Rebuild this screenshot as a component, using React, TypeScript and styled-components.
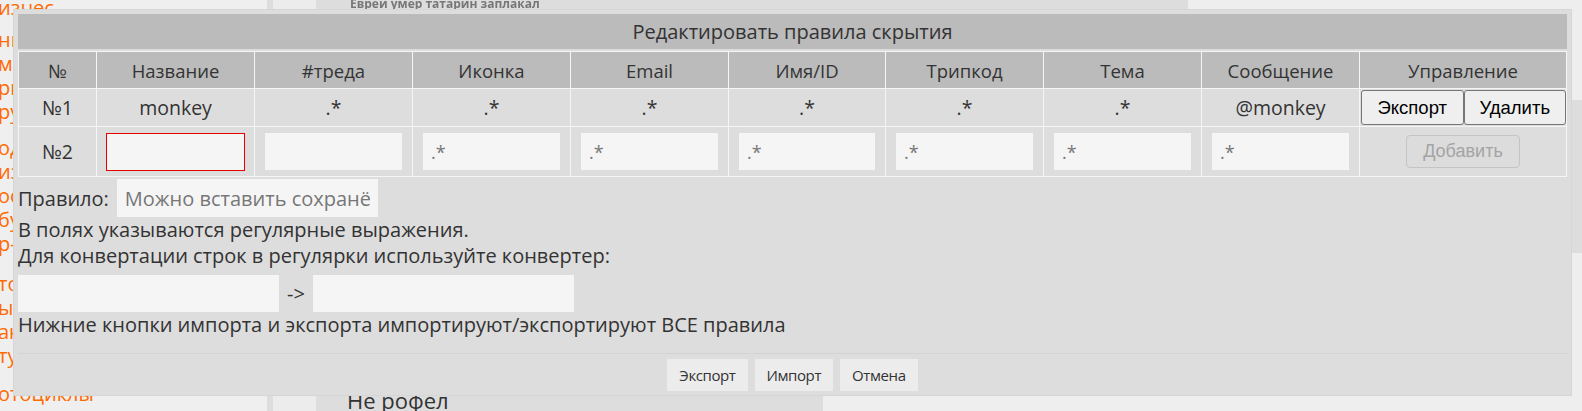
import React from 'react';
import styled, { createGlobalStyle } from 'styled-components';

const GlobalStyle = createGlobalStyle`
  html, body {
    margin: 0;
    padding: 0;
  }
  body {
    background: #eee;
    font-family: 'Open Sans', sans-serif;
    overflow: hidden;
  }
`;

const Page = styled.div`
  position: relative;
  display: flex;
  width: 1582px;
  height: 411px;
  overflow: hidden;
  background: #eee;
`;

const Sidebar = styled.nav`
  flex: none;
  width: 267px;
  background: #efefef;
  overflow: hidden;
`;

const LinkGroup = styled.div<{ $gap: number }>`
  margin-top: ${(p) => p.$gap}px;
  margin-left: -2px;
`;

const SideLink = styled.div`
  height: 24px;
  line-height: 24px;
  font-size: 20px;
  color: #ff6a00;
  white-space: nowrap;
`;

const Divider = styled.div`
  flex: none;
  width: 6px;
  background: #ddd;
`;

const NarrowColumn = styled.div`
  flex: none;
  width: 43px;
  background: #ececec;
`;

const MainColumn = styled.main`
  flex: none;
  width: 872px;
  display: flex;
  flex-direction: column;
  justify-content: space-between;
`;

const TopPost = styled.div`
  height: 10px;
  background: #ddd;
  overflow: hidden;
`;

const BlurredTitle = styled.div`
  margin: -5px 0 0 34px;
  font-size: 12px;
  font-weight: bold;
  color: #777;
  filter: blur(0.6px);
`;

const BottomPost = styled.div`
  width: 507px;
  height: 30px;
  background: #ddd;
  overflow: hidden;
`;

const PostText = styled.div`
  margin: 4px 0 0 31px;
  font-size: 22px;
  color: #333;
`;

const RightColumn = styled.aside`
  flex: 1;
  padding-top: 100px;
`;

const RightBox = styled.div`
  height: 153px;
  background: #ddd;
`;

const Modal = styled.div`
  position: absolute;
  top: 10px;
  left: 14px;
  width: 1557px;
  box-sizing: border-box;
  padding: 4px 4px 4px;
  background: #ddd;
  box-shadow: 0 0 0 1px #d6d6d6;
  font-family: 'Open Sans', sans-serif;
  font-size: 20px;
  color: #333;
`;

const Title = styled.div`
  height: 35px;
  line-height: 35px;
  background: #bbb;
  text-align: center;
  font-size: 20px;
  margin-bottom: 2px;
`;

const RulesTable = styled.table`
  width: 1548px;
  border-collapse: collapse;
  table-layout: fixed;
  border: 1px solid #f5f5f5;
`;

const Row = styled.tr<{ $h: number }>`
  height: ${(p) => p.$h}px;
`;

const HeadCell = styled.th`
  background: #bbb;
  font-weight: normal;
  font-size: 18.5px;
  border: 1px solid #f5f5f5;
  padding: 0;
`;

const Cell = styled.td`
  background: #ddd;
  text-align: center;
  font-size: 19.5px;
  border: 1px solid #f5f5f5;
  padding: 0 10px;
`;

const ButtonsCell = styled.td`
  background: #ddd;
  border: 1px solid #f5f5f5;
  padding: 0;
`;

const ButtonPair = styled.div`
  display: flex;
  padding: 0 0 0 1px;
`;

const RowButton = styled.button`
  flex: 1;
  height: 35px;
  margin: 0;
  background: #efefef;
  border: 1px solid #767676;
  border-radius: 3px;
  font-family: 'Liberation Sans', Arial, sans-serif;
  font-size: 18.5px;
  color: #000;
`;

const AddButton = styled.button`
  width: 114px;
  height: 33px;
  background: #dcdcdc;
  border: 1px solid #c4c4c4;
  border-radius: 4px;
  font-family: 'Liberation Sans', Arial, sans-serif;
  font-size: 18px;
  color: #a4a4a4;
`;

const FieldInput = styled.input<{ $invalid?: boolean }>`
  display: block;
  box-sizing: border-box;
  width: ${(p) => (p.$invalid ? 'calc(100% + 2px)' : '100%')};
  margin: ${(p) => (p.$invalid ? '0 -1px' : '0')};
  height: ${(p) => (p.$invalid ? 38 : 37)}px;
  padding: 0 8px;
  background: #f5f5f5;
  border: ${(p) => (p.$invalid ? '1px solid #e60000' : 'none')};
  outline: none;
  font-family: 'Open Sans', sans-serif;
  font-size: 18px;
  color: #333;

  &::placeholder {
    color: #777;
  }
`;

const Body = styled.div`
  padding-top: 2px;
`;

const RuleRow = styled.div`
  display: flex;
  align-items: center;
  gap: 8px;
  height: 38px;
`;

const PlainInput = styled.input<{ $w: number; $h: number }>`
  box-sizing: border-box;
  width: ${(p) => p.$w}px;
  height: ${(p) => p.$h}px;
  padding: 0 8px;
  background: #f5f5f5;
  border: none;
  outline: none;
  font-family: 'Open Sans', sans-serif;
  font-size: 20px;
  color: #333;

  &::placeholder {
    color: #777;
  }
`;

const Note = styled.div`
  line-height: 26px;
`;

const ConverterRow = styled.div`
  display: flex;
  align-items: center;
  margin-top: 6px;
  height: 37px;
`;

const Arrow = styled.span`
  width: 34px;
  text-align: center;
  font-size: 20px;
`;

const Footer = styled.div`
  display: flex;
  justify-content: center;
  gap: 7px;
  margin-top: 15px;
  padding-top: 5px;
  border-top: 1px solid #d3d3d3;
`;

const FooterButton = styled.button`
  height: 32px;
  padding: 0 12px;
  background: #ececec;
  border: none;
  font-family: 'Open Sans', sans-serif;
  font-size: 15px;
  letter-spacing: -0.4px;
  color: #333;
`;

const columns = ['№', 'Название', '#треда', 'Иконка', 'Email', 'Имя/ID', 'Трипкод', 'Тема', 'Сообщение', 'Управление'];
const widths = [78, 158, 158, 158, 158, 157, 158, 158, 158, 207];

const sideGroups = [
  { gap: -4, items: ['изнес'] },
  { gap: 8, items: ['ни', 'ми', 'ри', 'ру'] },
  { gap: 12, items: ['од', 'из', 'ос', 'бу', 'р-'] },
  { gap: 16, items: ['то', 'ые', 'ан', 'ту'] },
  { gap: 14, items: ['отоциклы'] },
];

const App = () => {
  return (
    <>
      <GlobalStyle />
      <Page>
        <Sidebar>
          {sideGroups.map((g, i) => (
            <LinkGroup key={i} $gap={g.gap}>
              {g.items.map((t) => (
                <SideLink key={t}>{t}</SideLink>
              ))}
            </LinkGroup>
          ))}
        </Sidebar>
        <Divider />
        <NarrowColumn />
        <MainColumn>
          <TopPost>
            <BlurredTitle>Еврей умер татарин заплакал</BlurredTitle>
          </TopPost>
          <BottomPost>
            <PostText>Не рофел</PostText>
          </BottomPost>
        </MainColumn>
        <RightColumn>
          <RightBox />
        </RightColumn>

        <Modal>
          <Title>Редактировать правила скрытия</Title>
          <RulesTable>
            <colgroup>
              {widths.map((w, i) => (
                <col key={i} style={{ width: w }} />
              ))}
            </colgroup>
            <thead>
              <Row $h={37}>
                {columns.map((c) => (
                  <HeadCell key={c}>{c}</HeadCell>
                ))}
              </Row>
            </thead>
            <tbody>
              <Row $h={38}>
                <Cell>№1</Cell>
                <Cell>monkey</Cell>
                <Cell>.*</Cell>
                <Cell>.*</Cell>
                <Cell>.*</Cell>
                <Cell>.*</Cell>
                <Cell>.*</Cell>
                <Cell>.*</Cell>
                <Cell>@monkey</Cell>
                <ButtonsCell>
                  <ButtonPair>
                    <RowButton>Экспорт</RowButton>
                    <RowButton>Удалить</RowButton>
                  </ButtonPair>
                </ButtonsCell>
              </Row>
              <Row $h={50}>
                <Cell>№2</Cell>
                <Cell>
                  <FieldInput $invalid />
                </Cell>
                <Cell>
                  <FieldInput />
                </Cell>
                {Array.from({ length: 6 }).map((_, i) => (
                  <Cell key={i}>
                    <FieldInput placeholder=".*" />
                  </Cell>
                ))}
                <Cell>
                  <AddButton disabled>Добавить</AddButton>
                </Cell>
              </Row>
            </tbody>
          </RulesTable>
          <Body>
            <RuleRow>
              <span>Правило:</span>
              <PlainInput $w={261} $h={38} placeholder="Можно вставить сохранённое правило" />
            </RuleRow>
            <Note>В полях указываются регулярные выражения.</Note>
            <Note>Для конвертации строк в регулярки используйте конвертер:</Note>
            <ConverterRow>
              <PlainInput $w={261} $h={37} />
              <Arrow>-&gt;</Arrow>
              <PlainInput $w={261} $h={37} />
            </ConverterRow>
            <Note>Нижние кнопки импорта и экспорта импортируют/экспортируют ВСЕ правила</Note>
          </Body>
          <Footer>
            <FooterButton>Экспорт</FooterButton>
            <FooterButton>Импорт</FooterButton>
            <FooterButton>Отмена</FooterButton>
          </Footer>
        </Modal>
      </Page>
    </>
  );
};

export default App;
